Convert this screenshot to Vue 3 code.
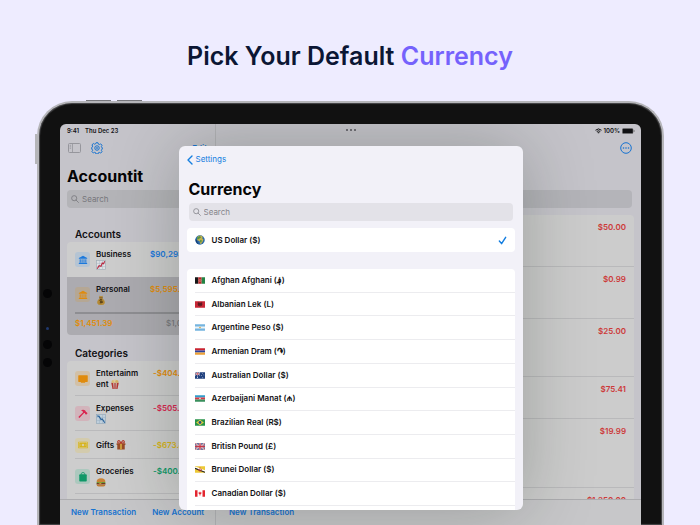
<template>
  <main class="page">
    <h1 class="headline">Pick Your Default <span>Currency</span></h1>

    <div class="device">
      <i class="key key-up"></i>
      <i class="key key-down"></i>
      <i class="key key-side"></i>
      <i class="sensor sensor-one"></i>
      <i class="sensor sensor-light"></i>
      <i class="sensor sensor-two"></i>
      <i class="sensor sensor-three"></i>

      <div class="screen">
        <!-- sidebar -->
        <aside class="sidebar">
          <div class="status"><span>9:41</span><span>Thu Dec 23</span></div>
          <div class="tools">
            <button class="icon-button muted" aria-label="Toggle sidebar">
              <svg width="13" height="10" viewBox="0 0 13 10" fill="none" stroke="currentColor">
                <rect x=".5" y=".5" width="12" height="9" rx="1" />
                <path d="M4.5 .5v9M1.7 2.3h1.4M1.7 3.8h1.4M1.7 5.3h1.4" stroke-width=".8" />
              </svg>
            </button>
            <button class="icon-button" aria-label="Settings">
              <svg width="12" height="12" viewBox="0 0 24 24" fill="none" stroke="currentColor" stroke-width="2">
                <path d="M10 1.5h4l.8 2.8 2 .8 2.5-1.4 2.8 2.8-1.4 2.5.8 2 1 .3v3l-1 .5-.8 2 1.4 2.6-2.8 2.8-2.6-1.4-2 .8-.7 2.4h-4l-.8-2.6-2-.8-2.5 1.4-2.8-2.8 1.4-2.5-.8-2-1-.3v-3.600l1-.5.8-2-1.400-2.500 2.800-2.800 2.500 1.400 2-.8z" stroke-linejoin="round" />
                <circle cx="12" cy="12" r="4.500" />
                <circle cx="12" cy="12" r="1" />
              </svg>
            </button>
            <button class="text-button edit">Edit</button>
          </div>
          <h2 class="large-title">Accountit</h2>
          <label class="search sidebar-search">
            <svg viewBox="0 0 10 10" fill="none" stroke="currentColor"><circle cx="4" cy="4" r="3.2" /><path d="M6.400 6.400L9.300 9.300" stroke-linecap="round" /></svg>
            <input type="search" placeholder="Search" aria-label="Search accounts" />
          </label>

          <h3 class="section-title">Accounts</h3>
          <ul class="group">
            <li v-for="account in accounts" :key="account.name" :class="['account', account.tone, { selected: account.left }]">
              <div class="entry">
                <span class="tile">
                  <svg viewBox="0 0 12 12" fill="currentColor"><path d="M6 .8L11 3.500v1H1v-1zM2 5h1.300v4H2zM4.300 5h1.200v4H4.300zM6.600 5h1.200v4H6.600zM8.800 5H10v4H8.800zM1.300 9.300h9.400l.5 1.400H.8z" /></svg>
                </span>
                <div class="name">
                  {{ account.name }}
                  <svg v-if="account.art === 'chart'" class="art" viewBox="0 0 16 16">
                    <rect x="1" y="1" width="14" height="14" fill="#dde1e4" stroke="#9fabb3" />
                    <path d="M5.500 1v14M10.500 1v14M1 5.500h14M1 10.500h14" stroke="#a9b7c2" stroke-width=".8" />
                    <path d="M2 14l3-5 3 1 2-5 2 1 2-4" fill="none" stroke="#ba2840" stroke-width="1.800" />
                  </svg>
                  <svg v-else class="art" viewBox="0 0 16 16">
                    <path d="M5 1l3 1 3-1-1 4q5 4 4 8-1 3-6 3t-6-3q-1-4 4-8z" fill="#b58a35" />
                    <path d="M5 4.500h6" stroke="#715123" stroke-width="1.300" />
                    <path d="M10 8q-4-2-4 .5T10 11t-4 1.500M8 6.500v7" fill="none" stroke="#493514" stroke-width="1.200" />
                  </svg>
                </div>
                <span class="amount">{{ account.amount }}</span>
              </div>
              <div v-if="account.left" class="budget">
                <b>{{ account.left }}</b><span>{{ account.limit }}</span>
              </div>
            </li>
          </ul>

          <h3 class="section-title categories-title">Categories</h3>
          <ul class="group categories">
            <li v-for="item in categories" :key="item.name" :class="['entry', item.tone, { single: item.tone === 'yellow' }]">
              <span class="tile">
                <svg v-if="item.tone === 'orange'" viewBox="0 0 12 12" fill="currentColor"><path d="M1 1.500h10a.7.7 0 0 1 .7.7v6.600a.7.7 0 0 1-.7.7H8.500v1h-5v-1H1a.7.7 0 0 1-.7-.7V2.200a.7.7 0 0 1 .7-.7z" /></svg>
                <svg v-else-if="item.tone === 'pink'" viewBox="0 0 12 12" fill="currentColor"><path d="M3.500 1.500Q7 0 9.200 2.400l.3 1.300 1 .3 1 1.200-1.800 1.700-1.300-1.200-.1-1-1 .1-5.600 6-1.300-1.300 5.800-5.600Q5.500 2 3.500 1.500z" /></svg>
                <svg v-else-if="item.tone === 'yellow'" viewBox="0 0 12 12"><rect x=".2" y="2" width="11.600" height="8" rx=".6" fill="currentColor" /><rect x="1.300" y="3.200" width="9.400" height="5.600" fill="none" stroke="#d9cea0" stroke-width=".6" /><circle cx="6" cy="6" r="1.600" fill="#d9cea0" /><path d="M2.300 6h1M8.700 6h1" stroke="#d9cea0" /></svg>
                <svg v-else viewBox="0 0 12 12"><path d="M4 3V2q0-1.300 2-1.300T8 2v1" fill="none" stroke="currentColor" /><rect x="1.500" y="2.800" width="9" height="8.700" rx="1" fill="currentColor" /></svg>
              </span>
              <div class="name">
                {{ item.name }}
                <svg v-if="item.tone === 'orange'" class="art" viewBox="0 0 16 16"><path d="M2 6l2 10h8l2-10z" fill="#c9c4be" /><path d="M2 6l2 10h2L5 6zM7 6v10h2V6zM11 6l-1 10h2l2-10z" fill="#b53631" /><circle cx="5" cy="4" r="2.500" fill="#d7bb74" /><circle cx="8" cy="3" r="2.500" fill="#dfcc98" /><circle cx="11" cy="4" r="2.500" fill="#d3b067" /></svg>
                <svg v-else-if="item.tone === 'pink'" class="art" viewBox="0 0 16 16"><rect x="1" y="1" width="14" height="14" fill="#bfd0dd" stroke="#8fa6b8" /><path d="M5.500 1v14M10.500 1v14M1 5.500h14M1 10.500h14" stroke="#9bb0c0" stroke-width=".8" /><path d="M2 3l3 1 3 5 2-1 4 6" fill="none" stroke="#265f97" stroke-width="1.800" /></svg>
                <svg v-else-if="item.tone === 'yellow'" class="art" viewBox="0 0 16 16"><path d="M1 5h14v3H1zM2 8h12v7H2z" fill="#9a4b25" /><path d="M6.500 5h3v10h-3z" fill="#d1a23e" /><path d="M8 5Q1 5 3 2t5 3q3-6 5-3t-5 3z" fill="none" stroke="#b53c2a" stroke-width="1.700" /></svg>
                <svg v-else class="art" viewBox="0 0 16 16"><path d="M1 8q0-6 7-6t7 6z" fill="#c98337" /><path d="M1 8h14v2H1z" fill="#6a9a3a" /><path d="M1 9.500h14V12H1z" fill="#6d3925" /><path d="M3 9h7l-3 2z" fill="#e0ae35" /><path d="M1 12h14q0 3-3 3H4q-3 0-3-3z" fill="#c07c35" /></svg>
              </div>
              <span class="amount">{{ item.amount }}</span>
            </li>
          </ul>

          <footer class="toolbar">
            <button class="text-button">New Transaction</button>
            <button class="text-button">New Account</button>
          </footer>
        </aside>

        <!-- transactions behind the sheet -->
        <section class="detail">
          <div class="status status-right">
            <svg width="7" height="6" viewBox="0 0 14 11" fill="none" stroke="currentColor" stroke-width="2"><path d="M1 4q6-5.500 12 0M3.500 6.500q3.500-3 7 0" /><path d="M5.500 8.500L7 10l1.500-1.500Q7 7.500 5.500 8.500z" fill="currentColor" stroke-width="1" /></svg>
            <span>100%</span>
            <svg width="13" height="6" viewBox="0 0 13 6"><rect x=".4" y=".4" width="10.600" height="5.200" rx="1.200" fill="currentColor" stroke="#777" stroke-width=".5" /><path d="M12 2v2" stroke="#777" /></svg>
          </div>
          <div class="more-row">
            <button class="icon-button" aria-label="More">
              <svg width="12" height="12" viewBox="0 0 12 12" fill="none" stroke="currentColor"><circle cx="6" cy="6" r="5.300" /><g fill="currentColor" stroke="none"><circle cx="3.500" cy="6" r=".8" /><circle cx="6" cy="6" r=".8" /><circle cx="8.500" cy="6" r=".8" /></g></svg>
            </button>
          </div>
          <div class="detail-search"></div>
          <ul class="transactions">
            <li v-for="row in transactions" :key="row.amount" :class="row.size">{{ row.amount }}</li>
          </ul>
          <footer class="toolbar detail-toolbar">
            <button class="text-button">New Transaction</button>
          </footer>
        </section>

        <div class="multitask"><i></i><i></i><i></i></div>

        <!-- currency sheet -->
        <section class="sheet" role="dialog" aria-labelledby="sheet-title">
          <a class="back" href="#">
            <svg width="6" height="10" viewBox="0 0 6 10" fill="none" stroke="currentColor" stroke-width="1.400" stroke-linecap="round" stroke-linejoin="round"><path d="M5 1L1 5l4 4" /></svg>
            Settings
          </a>
          <h2 id="sheet-title" class="large-title">Currency</h2>
          <label class="search">
            <svg viewBox="0 0 10 10" fill="none" stroke="currentColor"><circle cx="4" cy="4" r="3.200" /><path d="M6.400 6.400L9.300 9.300" stroke-linecap="round" /></svg>
            <input v-model="query" type="search" placeholder="Search" aria-label="Search currencies" />
          </label>

          <button class="current">
            <svg class="globe" viewBox="0 0 20 20">
              <circle cx="10" cy="10" r="9.500" fill="#2868a8" />
              <path d="M6 2l6-1 4 3-2 2 3 3-2 5-3 4-2-1-1-5-4-1-1-4z" fill="#c5b24b" />
              <path d="M5 4l5-2 2 3-3 2-3 2-2-1zM10 10l4 1-2 5-2-3z" fill="#549447" />
              <path d="M1 8q0 8 7 11-4-5-4-8z" fill="#173c72" />
            </svg>
            <span>US Dollar ($)</span>
            <svg class="check" viewBox="0 0 10 10" fill="none" stroke="currentColor" stroke-width="1.600" stroke-linecap="round" stroke-linejoin="round"><path d="M1.500 5.500l2.500 3 4.500-7" /></svg>
          </button>

          <ul class="currencies">
            <li v-for="currency in shown" :key="currency.code">
              <button>
                <svg class="flag" viewBox="0 0 18 12">
                  <template v-if="currency.code === 'af'"><path fill="#171717" d="M0 0h6v12H0z" /><path fill="#b82628" d="M6 0h6v12H6z" /><path fill="#238344" d="M12 0h6v12h-6z" /><circle cx="9" cy="6" r="1.800" fill="none" stroke="#e0a79b" /></template>
                  <template v-else-if="currency.code === 'al'"><path fill="#c82836" d="M0 0h18v12H0z" /><path fill="#5a1a20" d="M9 4L7 1 6 3 4 3l2 2-2 1 2 1-1 2 3-1 1 3 1-3 3 1-1-2 2-1-2-1 2-2-2 0-1-2z" /></template>
                  <template v-else-if="currency.code === 'ar'"><path fill="#75b4df" d="M0 0h18v12H0z" /><path fill="#eef3f5" d="M0 4h18v4H0z" /><circle cx="9" cy="6" r="1.500" fill="#d9a63c" /></template>
                  <template v-else-if="currency.code === 'am'"><path fill="#c92532" d="M0 0h18v4H0z" /><path fill="#2943a0" d="M0 4h18v4H0z" /><path fill="#eca137" d="M0 8h18v4H0z" /></template>
                  <template v-else-if="currency.code === 'au'"><path fill="#20417e" d="M0 0h18v12H0z" /><path d="M0 0l9 6M9 0L0 6" stroke="#fff" /><path d="M4.500 0v6M0 3h9" stroke="#fff" stroke-width="1.600" /><path d="M4.500 0v6M0 3h9" stroke="#c7343f" /><g fill="#fff"><circle cx="4.500" cy="9" r="1" /><circle cx="13.500" cy="2.500" r=".7" /><circle cx="16" cy="5" r=".7" /><circle cx="11.500" cy="6" r=".7" /><circle cx="14" cy="10" r=".8" /></g></template>
                  <template v-else-if="currency.code === 'az'"><path fill="#319dca" d="M0 0h18v4H0z" /><path fill="#d73745" d="M0 4h18v4H0z" /><path fill="#398f5c" d="M0 8h18v4H0z" /><circle cx="9" cy="6" r="1.300" fill="#fff" /></template>
                  <template v-else-if="currency.code === 'br'"><path fill="#27934a" d="M0 0h18v12H0z" /><path fill="#e8cd3d" d="M9 1l7 5-7 5-7-5z" /><circle cx="9" cy="6" r="2.600" fill="#294d87" /></template>
                  <template v-else-if="currency.code === 'gb'"><path fill="#27437e" d="M0 0h18v12H0z" /><path d="M0 0l18 12M18 0L0 12" stroke="#eee" stroke-width="2.500" /><path d="M0 0l18 12M18 0L0 12" stroke="#c73546" /><path d="M9 0v12M0 6h18" stroke="#eee" stroke-width="4" /><path d="M9 0v12M0 6h18" stroke="#c73546" stroke-width="2.400" /></template>
                  <template v-else-if="currency.code === 'bn'"><path fill="#ecc936" d="M0 0h18v12H0z" /><path d="M0 2l18 7" stroke="#fff" stroke-width="3" /><path d="M0 4l18 7" stroke="#222" stroke-width="2" /><path d="M9 2v7M6 5q0 4 3 4t3-4" fill="none" stroke="#c63c34" stroke-width="1.300" /></template>
                  <template v-else><path fill="#fff" d="M0 0h18v12H0z" /><path fill="#e3252f" d="M0 0h4.500v12H0zM13.500 0H18v12h-4.500zM9 2l1 2 2 0-1 3-1.500 1v2h-1V8L7 7 6 4h2z" /></template>
                </svg>
                <span>{{ currency.name }} ({{ currency.symbol }})</span>
              </button>
            </li>
          </ul>
        </section>
      </div>
    </div>
  </main>
</template>

<script setup>
import { computed, ref } from "vue";

const query = ref("");

const accounts = [
  { name: "Business", amount: "$90,293.11", tone: "blue", art: "chart" },
  { name: "Personal", amount: "$5,595.20", tone: "orange", art: "bag", left: "$1,451.39", limit: "$1,000" },
];

const categories = [
  { name: "Entertainment", amount: "-$404.50", tone: "orange" },
  { name: "Expenses", amount: "-$505.25", tone: "pink" },
  { name: "Gifts", amount: "-$673.80", tone: "yellow" },
  { name: "Groceries", amount: "-$400.10", tone: "green" },
];

const transactions = [
  { amount: "$50.00", size: "medium" },
  { amount: "$0.99", size: "medium" },
  { amount: "$25.00", size: "tall" },
  { amount: "$75.41", size: "short" },
  { amount: "$19.99", size: "taller" },
  { amount: "$1,250.00", size: "medium" },
];

const currencies = [
  { code: "af", name: "Afghan Afghani", symbol: "؋" },
  { code: "al", name: "Albanian Lek", symbol: "L" },
  { code: "ar", name: "Argentine Peso", symbol: "$" },
  { code: "am", name: "Armenian Dram", symbol: "֏" },
  { code: "au", name: "Australian Dollar", symbol: "$" },
  { code: "az", name: "Azerbaijani Manat", symbol: "₼" },
  { code: "br", name: "Brazilian Real", symbol: "R$" },
  { code: "gb", name: "British Pound", symbol: "£" },
  { code: "bn", name: "Brunei Dollar", symbol: "$" },
  { code: "ca", name: "Canadian Dollar", symbol: "$" },
];

const shown = computed(() =>
  currencies.filter((c) => c.name.toLowerCase().includes(query.value.toLowerCase()))
);
</script>

<style>
body {
  margin: 0;
  background: #eeecff;
}
</style>

<style scoped>
* {
  box-sizing: border-box;
}

.page {
  display: flex;
  flex-direction: column;
  height: 100vh;
  overflow: hidden;
  background: #eeecff;
  color: #111114;
  font-family: Inter, "DejaVu Sans", sans-serif;
  font-size: 8px;
  font-weight: 600;
  line-height: 11px;
}

h1,
h2,
h3,
ul {
  margin: 0;
  padding: 0;
  list-style: none;
}

button,
input {
  padding: 0;
  border: 0;
  background: none;
  color: inherit;
  font: inherit;
}

svg {
  display: block;
  flex: none;
}

.headline {
  padding: 37px 0 26px;
  color: #0b1634;
  font-size: 25px;
  font-weight: 600;
  line-height: 38px;
  text-align: center;
}

.headline span {
  color: #7562fc;
}

/* tablet frame */
.device {
  position: relative;
  display: flex;
  flex: 1;
  min-height: 0;
  margin: 0 36px 0 37px;
  padding: 21px 21px 0;
  border: 2px solid #b5b5b9;
  border-bottom: 0;
  border-radius: 35px 35px 0 0;
  background: #111;
  box-shadow: inset 0 0 1px 1px #4a4a4c;
}

.key {
  position: absolute;
  top: -3px;
  width: 25px;
  height: 1px;
  background: #77777c;
}

.key-up {
  left: 47px;
}

.key-down {
  left: 78px;
}

.key-side {
  top: 31px;
  left: -4px;
  width: 2px;
  height: 30px;
  background: #b5b5b9;
}

.sensor {
  position: absolute;
  left: 4px;
  width: 9px;
  height: 9px;
  border-radius: 50%;
  background: #050506;
}

.sensor-one {
  top: 186px;
}

.sensor-light {
  top: 224px;
  left: 7px;
  width: 3px;
  height: 3px;
  background: #203a70;
}

.sensor-two {
  top: 237px;
}

.sensor-three {
  top: 255px;
}

.screen {
  position: relative;
  display: flex;
  flex: 1;
  min-width: 0;
  overflow: hidden;
  border-radius: 6px 6px 0 0;
  background: #c5c4ca;
}

.sidebar {
  display: flex;
  flex: none;
  flex-direction: column;
  width: 156px;
  border-right: 1px solid #b3b3b7;
}

.status {
  display: flex;
  flex: none;
  gap: 6px;
  padding: 1px 7px 0;
  font-size: 6px;
  font-weight: 600;
}

.tools {
  display: flex;
  flex: none;
  align-items: center;
  gap: 10px;
  height: 24px;
  padding: 0 8px;
}

.icon-button,
.text-button {
  color: #1773d0;
}

.muted {
  color: #96969c;
}

.edit {
  margin-left: auto;
}

.large-title {
  color: #050506;
  font-size: 16px;
  font-weight: 700;
  line-height: 20px;
}

.sidebar .large-title {
  padding: 6px 7px 0;
}

.search {
  display: flex;
  flex: none;
  align-items: center;
  gap: 3px;
  height: 18px;
  padding: 0 4px;
  border-radius: 4px;
  background: #e3e2e8;
  color: #85858b;
  font-weight: 400;
}

.search svg {
  width: 8px;
  height: 8px;
}

.search input {
  flex: 1;
  min-width: 0;
  outline: 0;
}

.search input::placeholder {
  color: inherit;
  opacity: 1;
}

.sidebar-search {
  margin: 4px 7px 0;
  background: #b4b4b8;
  color: #77777c;
}

.section-title {
  padding: 18px 15px 0;
  font-size: 10px;
  font-weight: 600;
  line-height: 16px;
}

.categories-title {
  padding-top: 10px;
}

.group {
  flex: none;
  margin: 0 7px;
  overflow: hidden;
  border-radius: 4px;
  background: #cdcdcd;
}

.categories {
  flex: 1;
  min-height: 0;
  border-radius: 4px 4px 0 0;
}

.entry {
  position: relative;
  display: flex;
  align-items: center;
  gap: 6px;
  height: 35px;
  padding-left: 8px;
}

.single {
  height: 28px;
}

.categories .entry::after {
  position: absolute;
  right: 0;
  bottom: 0;
  left: 8px;
  height: 1px;
  background: #bababc;
  content: "";
}

.tile {
  display: grid;
  flex: none;
  place-items: center;
  width: 15px;
  height: 15px;
  border-radius: 3px;
}

.tile svg {
  width: 10px;
  height: 10px;
}

.name {
  flex: none;
  width: 44px;
  overflow-wrap: anywhere;
}

.art {
  display: inline-block;
  width: 10px;
  height: 10px;
  vertical-align: -2px;
}

.account .art {
  display: block;
}

.amount {
  align-self: flex-start;
  padding-top: 7px;
  margin-left: 4px;
  white-space: nowrap;
}

.categories .amount {
  margin-left: 7px;
}

.single .amount {
  align-self: center;
  padding-top: 0;
}

.blue .amount,
.blue .tile {
  color: #1b78dc;
}

.blue .tile {
  background: #b5c4d3;
}

.orange .amount,
.orange .tile,
.budget b {
  color: #e08b0c;
}

.orange .tile {
  background: #d2c0a6;
}

.selected .tile {
  background: #b5a794;
}

.pink .amount,
.pink .tile {
  color: #d9254f;
}

.pink .tile {
  background: #d2b4bb;
}

.yellow .amount,
.yellow .tile {
  color: #d6b31a;
}

.yellow .tile {
  background: #d3cbad;
}

.green .amount,
.green .tile {
  color: #0f9868;
}

.green .tile {
  background: #acc8be;
}

.selected {
  background: #acabb0;
}

.budget {
  display: flex;
  justify-content: space-between;
  height: 23px;
  margin: 0 7px 0 8px;
  padding-top: 4px;
  border-top: 2px solid #8e8e92;
  color: #77777c;
}

.budget b {
  font-weight: 600;
}

.budget span {
  width: 35px;
  font-weight: 500;
}

.toolbar {
  display: flex;
  flex: none;
  gap: 16px;
  height: 26px;
  padding: 0 11px;
  border-top: 1px solid #acacaf;
  background: #c7c7c9;
  white-space: nowrap;
}

.detail-toolbar {
  padding: 0 13px;
}

/* detail column */
.detail {
  display: flex;
  flex: 1;
  flex-direction: column;
  min-width: 0;
}

.status-right {
  align-items: center;
  justify-content: flex-end;
  gap: 2px;
  padding-right: 6px;
}

.more-row {
  display: flex;
  flex: none;
  align-items: center;
  justify-content: flex-end;
  height: 24px;
  padding-right: 9px;
}

.detail-search {
  flex: none;
  height: 18px;
  margin: 30px 9px 7px;
  border-radius: 4px;
  background: #b4b4b9;
}

.transactions {
  flex: 1;
  min-height: 0;
  margin: 0 7px;
  overflow: hidden;
  border-radius: 4px 4px 0 0;
  background: #cccccc;
  color: #cc3a3a;
  text-align: right;
}

.transactions li {
  height: 52px;
  padding: 7px 8px 0;
  border-bottom: 1px solid #b9b9bb;
}

.transactions .tall {
  height: 58px;
}

.transactions .short {
  height: 42px;
}

.transactions .taller {
  height: 69px;
}

.multitask {
  position: absolute;
  top: 5px;
  left: 50%;
  display: flex;
  gap: 2px;
  transform: translateX(-50%);
}

.multitask i {
  width: 2px;
  height: 2px;
  border-radius: 50%;
  background: #55555a;
}

/* sheet */
.sheet {
  position: absolute;
  top: 22px;
  bottom: 15px;
  left: 50%;
  display: flex;
  flex-direction: column;
  width: 344px;
  padding: 8px 8px 0;
  overflow: hidden;
  border-radius: 6px;
  background: #f2f1f8;
  box-shadow: 0 0 70px rgba(20, 30, 20, 0.26);
  transform: translateX(-50%);
}

.back {
  display: flex;
  flex: none;
  align-items: center;
  align-self: flex-start;
  gap: 3px;
  color: #147ee0;
  font-weight: 400;
  text-decoration: none;
}

.sheet .large-title {
  padding: 14px 2px 4px;
}

.sheet .search {
  margin: 0 2px;
}

.current {
  display: flex;
  flex: none;
  align-items: center;
  gap: 7px;
  height: 24px;
  margin: 7px 0 17px;
  padding: 0 8px;
  border-radius: 4px;
  background: #fff;
}

.globe {
  width: 10px;
  height: 10px;
}

.check {
  width: 9px;
  height: 9px;
  margin-left: auto;
  color: #147ee0;
}

.currencies {
  display: flex;
  flex: 1;
  flex-direction: column;
  min-height: 0;
  border-radius: 4px 4px 0 0;
  background: #fff;
}

.currencies li {
  flex: 2 0 0;
  max-height: 24px;
  margin-left: 8px;
  border-bottom: 1px solid #ececef;
}

.currencies::after {
  flex: 0 0 4px;
  content: "";
}

.currencies button {
  display: flex;
  align-items: center;
  gap: 7px;
  width: 100%;
  height: 100%;
}

.flag {
  width: 10px;
  height: 7px;
}
</style>
